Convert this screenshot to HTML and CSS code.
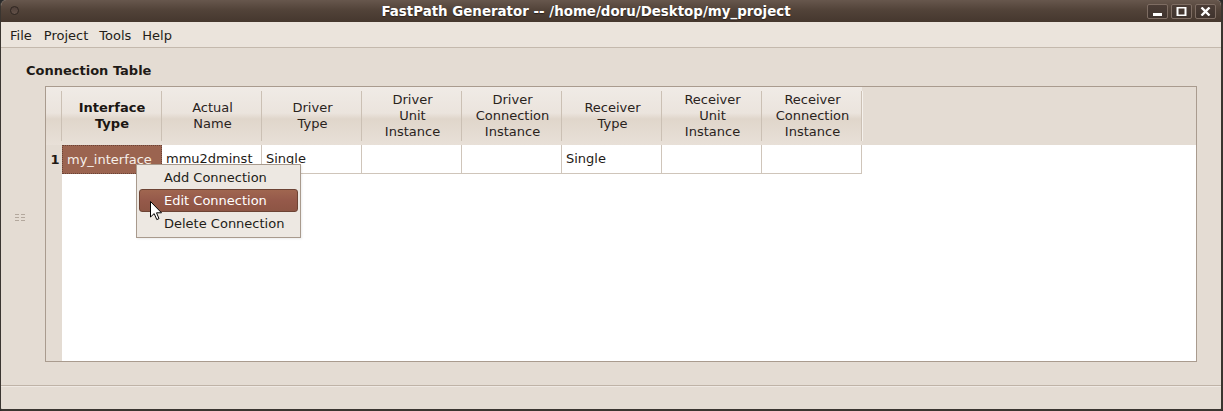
FILE: index.html
```html
<!DOCTYPE html>
<html>
<head>
<meta charset="utf-8">
<link rel="stylesheet" href="styles.css">
</head>
<body>
<div class="window">
  <div class="titlebar">
    <span class="wm-dot"></span>
    <span class="title">FastPath Generator -- /home/doru/Desktop/my_project</span>
    <div class="wm-buttons">
      <span class="wm-btn"><svg width="11" height="9" viewBox="0 0 11 9"><rect x="1" y="6" width="9" height="3" fill="#fff"/></svg></span>
      <span class="wm-btn"><svg width="11" height="9" viewBox="0 0 11 9"><rect x="1.5" y="0.5" width="8" height="8" fill="none" stroke="#fff" stroke-width="2"/></svg></span>
      <span class="wm-btn"><svg width="11" height="9" viewBox="0 0 11 9"><path d="M1.5 0.5 L9.5 8.5 M9.5 0.5 L1.5 8.5" stroke="#fff" stroke-width="2.4"/></svg></span>
    </div>
  </div>
  <div class="menubar">
    <span class="menu-item">File</span>
    <span class="menu-item">Project</span>
    <span class="menu-item">Tools</span>
    <span class="menu-item">Help</span>
  </div>
  <div class="content">
    <div class="section-title">Connection Table</div>
    <div class="table-row">
      <div class="handle">
        <svg width="11" height="7" viewBox="0 0 11 7"><g fill="#b3a89d"><rect x="0" y="0" width="4" height="1"/><rect x="6" y="0" width="4" height="1"/><rect x="0" y="3" width="4" height="1"/><rect x="6" y="3" width="4" height="1"/><rect x="0" y="6" width="4" height="1"/><rect x="6" y="6" width="4" height="1"/></g></svg>
      </div>
      <div class="frame">
        <div class="thead">
          <div class="hcell corner"></div>
          <div class="hcell bold">Interface<br>Type</div>
          <div class="hcell">Actual<br>Name</div>
          <div class="hcell">Driver<br>Type</div>
          <div class="hcell">Driver<br>Unit<br>Instance</div>
          <div class="hcell">Driver<br>Connection<br>Instance</div>
          <div class="hcell">Receiver<br>Type</div>
          <div class="hcell">Receiver<br>Unit<br>Instance</div>
          <div class="hcell">Receiver<br>Connection<br>Instance</div>
        </div>
        <div class="trow">
          <div class="rnum">1</div>
          <div class="cell selected">my_interface</div>
          <div class="cell">mmu2dminst</div>
          <div class="cell">Single</div>
          <div class="cell"></div>
          <div class="cell"></div>
          <div class="cell">Single</div>
          <div class="cell"></div>
          <div class="cell"></div>
        </div>
      </div>
    </div>
  </div>
  <div class="statusbar"></div>

  <div class="context-menu">
    <div class="cm-item">Add Connection</div>
    <div class="cm-item active">Edit Connection</div>
    <div class="cm-item">Delete Connection</div>
  </div>
  <svg class="cursor" width="13" height="20" viewBox="0 0 13 20"><path d="M0.5 0.5 L0.5 16 L4.2 12.6 L6.8 18.6 L9 17.6 L6.5 11.8 L11.5 11.8 Z" fill="#fff" stroke="#000" stroke-width="1" stroke-linejoin="round"/></svg>
</div>
</body>
</html>
```

FILE: styles.css
```css
html, body {
  margin: 0;
  padding: 0;
  background: #2b2b2b;
}
body {
  width: 1223px;
  height: 411px;
  overflow: hidden;
  font-family: "DejaVu Sans", sans-serif;
  font-size: 13px;
  color: #1e1a16;
}
.window {
  position: relative;
  width: 1223px;
  height: 411px;
  box-sizing: border-box;
  border-left: 1px solid #3a3530;
  border-right: 2px solid #3a3530;
  border-bottom: 2px solid #3a3530;
  border-radius: 6px 6px 3px 3px;
  overflow: hidden;
  background: #e4dcd3;
  display: flex;
  flex-direction: column;
}
.titlebar {
  height: 22px;
  flex: none;
  background: linear-gradient(#67574d, #524339 45%, #45372e);
  display: flex;
  align-items: center;
  justify-content: center;
  position: relative;
  padding-right: 50px;
}
.wm-dot {
  position: absolute;
  left: 9px;
  top: 6px;
  width: 9px;
  height: 9px;
  border-radius: 50%;
  border: 1px solid #2f2621;
  box-sizing: border-box;
  background: linear-gradient(#4f4039, #645249);
}
.title {
  color: #fff;
  font-weight: bold;
  font-size: 13.4px;
  text-shadow: 0 1px 1px #2a201b;
}
.wm-buttons {
  position: absolute;
  right: 5px;
  top: 4px;
  display: flex;
  gap: 3px;
}
.wm-btn {
  width: 21px;
  height: 15px;
  box-sizing: border-box;
  border: 1px solid #7e6d63;
  border-radius: 2px;
  background: linear-gradient(#4b3d36, #3f332d);
  display: flex;
  align-items: center;
  justify-content: center;
}
.menubar {
  height: 23px;
  flex: none;
  background: #ebe4dc;
  border-bottom: 1px solid #c4b9ad;
  display: flex;
  align-items: center;
  padding-left: 3px;
  padding-top: 2px;
}
.menu-item {
  padding: 0 6px;
  color: #231d18;
}
.menu-item:nth-child(n+3) {
  margin-left: -1px;
}
.content {
  flex: 1;
  display: flex;
  flex-direction: column;
  padding: 14px 24px 0 0;
  border-bottom: 1px solid #bfb3a7;
}
.section-title {
  font-weight: bold;
  padding-left: 25px;
  height: 17px;
  line-height: 17px;
  margin-bottom: 7px;
}
.table-row {
  display: flex;
}
.handle {
  width: 44px;
  flex: none;
  display: flex;
  align-items: center;
  justify-content: flex-start;
  padding-left: 14px;
  padding-bottom: 14px;
  box-sizing: border-box;
}
.frame {
  width: 1154px;
  height: 276px;
  box-sizing: border-box;
  border: 1px solid #a99b8e;
  background: linear-gradient(to right, #e4dcd3 16px, #ffffff 16px);
  display: flex;
  flex-direction: column;
}
.thead {
  display: flex;
  height: 58px;
  background: #e4dcd3;
}
.hcell {
  width: 100px;
  flex: none;
  position: relative;
  display: flex;
  align-items: center;
  justify-content: center;
  text-align: center;
  line-height: 16px;
  color: #2a231d;
  padding-left: 1px;
  box-sizing: border-box;
  background: linear-gradient(#f0ebe6, #ebe4dd 45%, #e0d6cb 55%, #e8e0d8);
}
.hcell::after {
  content: "";
  position: absolute;
  right: 0;
  top: 4px;
  bottom: 4px;
  width: 1px;
  background: #cbc0b4;
  box-shadow: 1px 0 0 #f5f1ec;
}
.hcell.corner {
  width: 16px;
}
.hcell.bold {
  font-weight: bold;
  color: #1a1512;
  padding-left: 0;
}
.trow {
  display: flex;
  height: 29px;
}
.rnum {
  width: 16px;
  flex: none;
  display: flex;
  align-items: center;
  justify-content: center;
  font-weight: bold;
  padding-left: 2px;
  padding-bottom: 1px;
  box-sizing: border-box;
}
.cell {
  width: 100px;
  flex: none;
  box-sizing: border-box;
  border-right: 1px solid #cfc5ba;
  border-bottom: 1px solid #cfc5ba;
  padding: 0 4px 1px;
  display: flex;
  align-items: center;
  white-space: nowrap;
  overflow: hidden;
  background: #fff;
}
.cell.selected {
  background: #9b6450;
  color: #f6efe9;
  border: 1px dotted #6a4336;
  padding-left: 4px;
}
.context-menu {
  position: absolute;
  left: 135px;
  top: 164px;
  width: 165px;
  box-sizing: border-box;
  border: 1px solid #a89a8d;
  background: #ede8e2;
  padding: 1px 2px 2px;
  box-shadow: 1px 1px 2px rgba(0,0,0,0.08);
}
.cm-item {
  height: 23px;
  line-height: 23px;
  padding-left: 25px;
  color: #231d18;
  box-sizing: border-box;
}
.cm-item.active {
  background: linear-gradient(#a06650, #95594a 50%, #8d5544);
  border: 1px solid #6d4334;
  border-radius: 3px;
  color: #fff;
  line-height: 21px;
  padding-left: 24px;
}
.cursor {
  position: absolute;
  left: 149px;
  top: 201px;
}
.statusbar {
  height: 22px;
  flex: none;
  border-top: 1px solid #efe9e3;
  background: #e4dcd3;
}
```
